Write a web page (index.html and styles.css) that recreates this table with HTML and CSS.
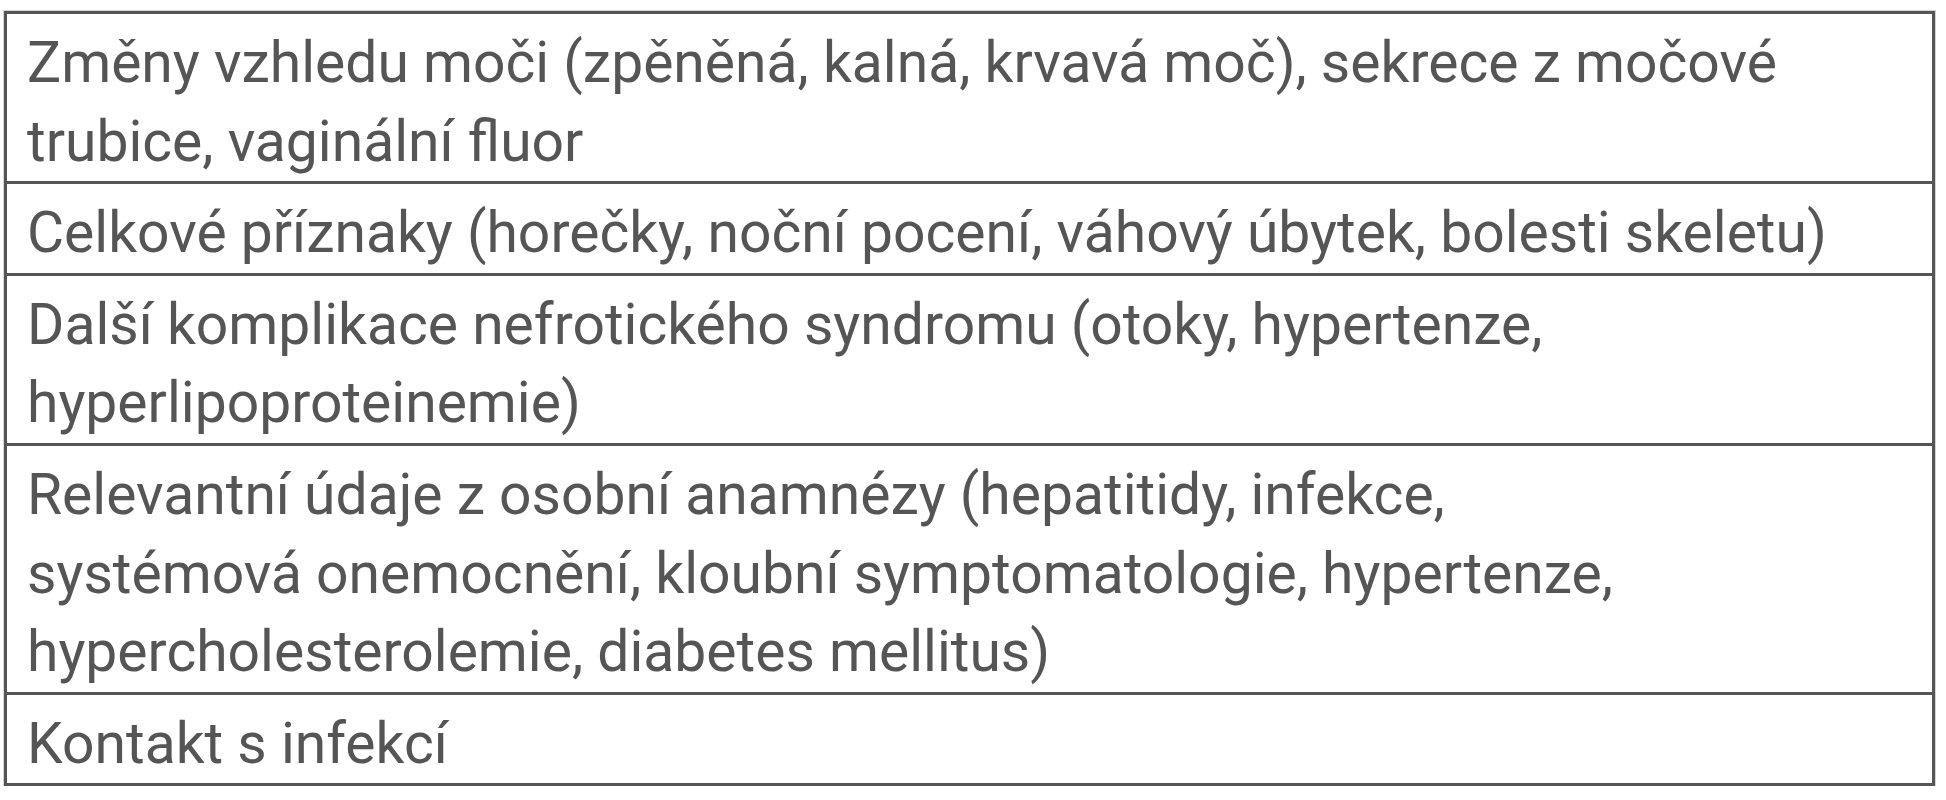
FILE: index.html
```html
<!DOCTYPE html>
<html lang="cs">
<head>
<meta charset="utf-8">
<title>Příznaky</title>
<link rel="stylesheet" href="styles.css">
</head>
<body>
<table class="symptoms">
  <tbody>
    <tr><td>Změny vzhledu moči (zpěněná, kalná, krvavá moč), sekrece z močové<br>trubice, vaginální fluor</td></tr>
    <tr><td>Celkové příznaky (horečky, noční pocení, váhový úbytek, bolesti skeletu)</td></tr>
    <tr><td>Další komplikace nefrotického syndromu (otoky, hypertenze,<br>hyperlipoproteinemie)</td></tr>
    <tr><td>Relevantní údaje z osobní anamnézy (hepatitidy, infekce,<br>systémová onemocnění, kloubní symptomatologie, hypertenze,<br>hypercholesterolemie, diabetes mellitus)</td></tr>
    <tr><td>Kontakt s infekcí</td></tr>
  </tbody>
</table>
</body>
</html>
```
FILE: styles.css
```css
html, body {
  margin: 0;
  padding: 0;
  background: #ffffff;
}

body {
  padding: 11px 0 0 4px;
}

.symptoms {
  border-collapse: collapse;
  width: 1931px;
  font-family: Roboto, "Liberation Sans", sans-serif;
  font-size: 57px;
  line-height: 78.6px;
  color: #555555;
  box-shadow: 0 0 0 1px #d4d4d4;
}

.symptoms td {
  border: 3px solid #555555;
  padding: 10px 20px 0 20px;
  white-space: nowrap;
  vertical-align: top;
}
```
